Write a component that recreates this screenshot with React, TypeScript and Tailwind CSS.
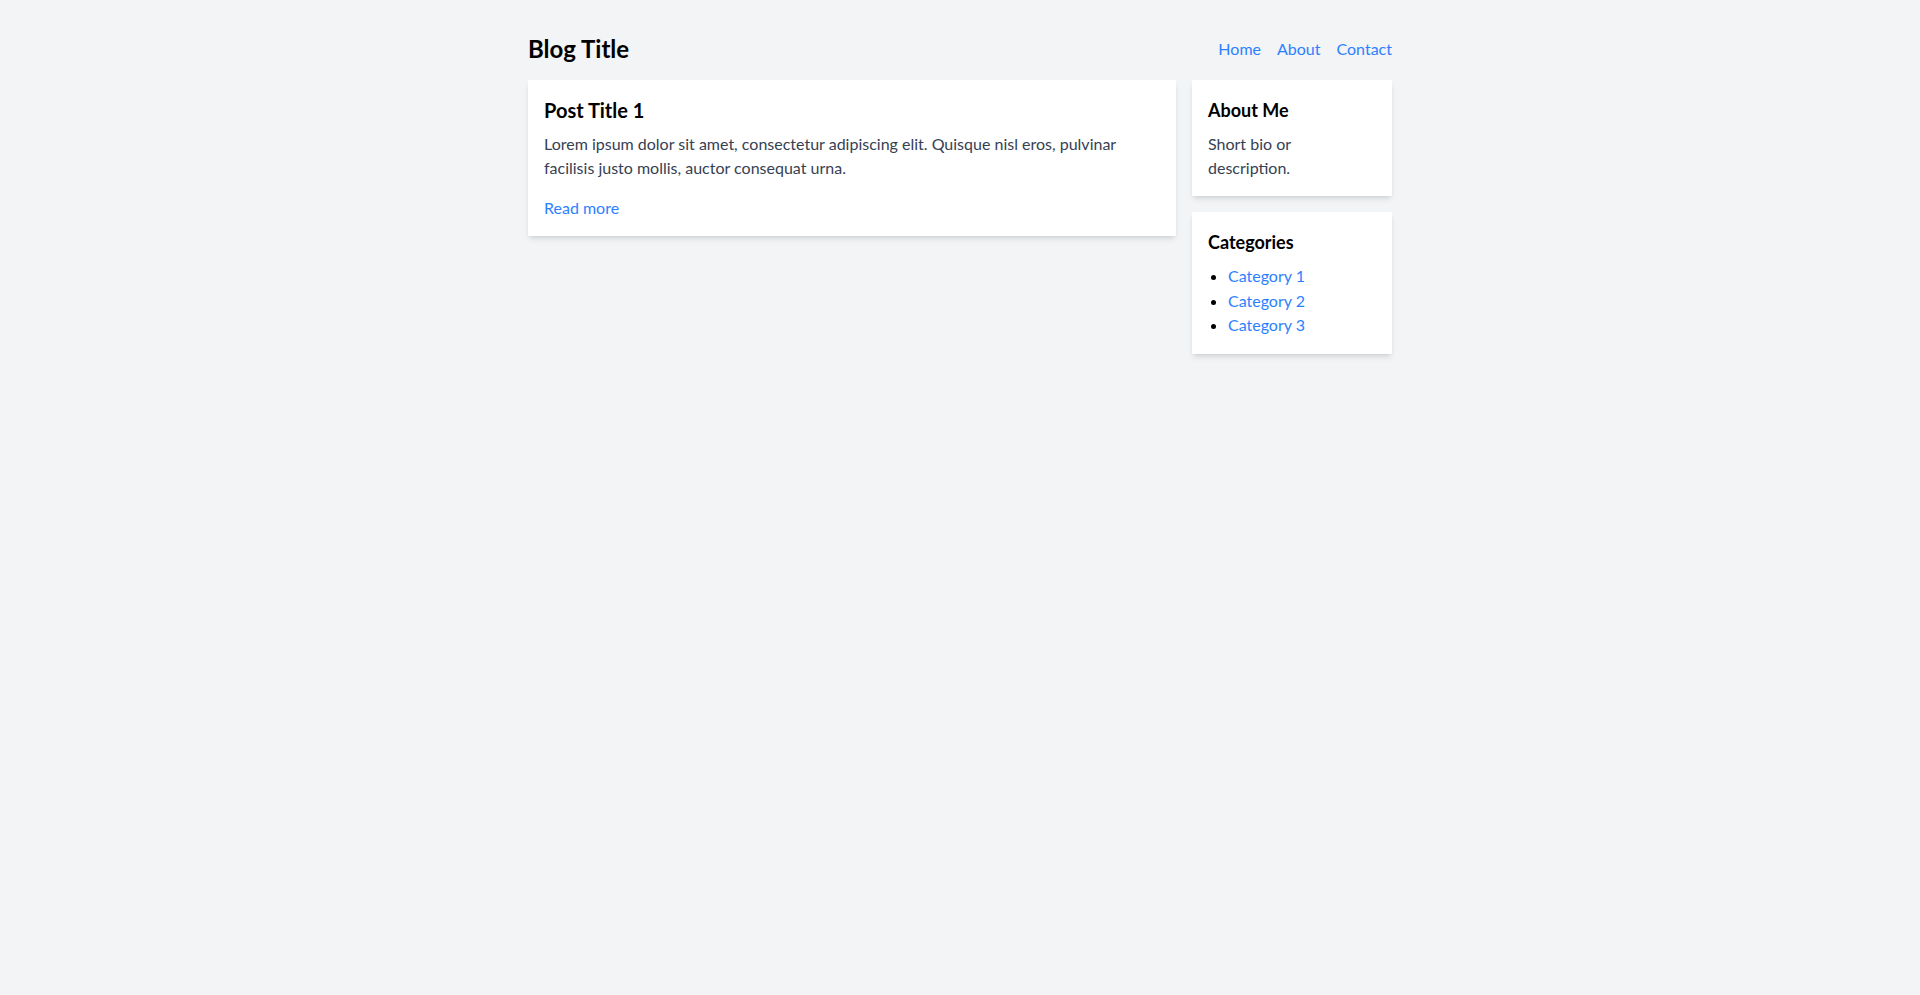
export default function App() {
  return (
    <div className="min-h-screen bg-gray-100" style={{ fontFamily: 'Lato, "Noto Sans", sans-serif' }}>
      <div className="max-w-4xl mx-auto p-4">
        <header className="flex items-center justify-between pt-[17px] pb-[15px]">
          <h1 className="text-2xl font-bold text-black">Blog Title</h1>
          <nav className="flex space-x-4 text-base">
            <a href="#" className="text-blue-500">Home</a>
            <a href="#" className="text-blue-500">About</a>
            <a href="#" className="text-blue-500">Contact</a>
          </nav>
        </header>
        <div className="flex gap-4 items-start">
          <main className="flex-1">
            <article className="bg-white shadow-md p-4">
              <h2 className="text-xl font-bold text-black mb-2">Post Title 1</h2>
              <p className="text-gray-700 mb-4">
                Lorem ipsum dolor sit amet, consectetur adipiscing elit. Quisque nisl eros, pulvinar facilisis justo mollis, auctor consequat urna.
              </p>
              <a href="#" className="text-blue-500">Read more</a>
            </article>
          </main>
          <aside className="w-[200px] flex flex-col gap-4">
            <div className="bg-white shadow-md p-4">
              <h3 className="text-lg font-bold text-black mb-2">About Me</h3>
              <p className="text-gray-700">Short bio or description.</p>
            </div>
            <div className="bg-white shadow-md p-4">
              <h3 className="text-lg font-bold text-black mb-2">Categories</h3>
              <ul className="list-disc pl-5 mt-[1px] leading-[24.5px]">
                <li><a href="#" className="text-blue-500">Category 1</a></li>
                <li><a href="#" className="text-blue-500">Category 2</a></li>
                <li><a href="#" className="text-blue-500">Category 3</a></li>
              </ul>
            </div>
          </aside>
        </div>
      </div>
    </div>
  );
}
